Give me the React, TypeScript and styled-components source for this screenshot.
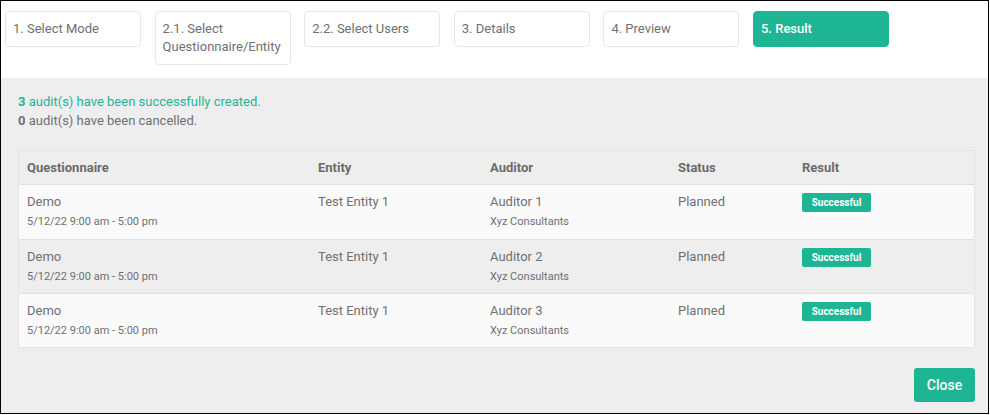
import styled, { createGlobalStyle } from "styled-components";

const GlobalStyle = createGlobalStyle`
  html, body {
    margin: 0;
    padding: 0;
    background: #fff;
  }
  body {
    font-family: Roboto, "Liberation Sans", Arial, sans-serif;
  }
`;

const steps = [
  "1. Select Mode",
  "2.1. Select Questionnaire/Entity",
  "2.2. Select Users",
  "3. Details",
  "4. Preview",
  "5. Result",
];

const rows = [
  { auditor: "Auditor 1" },
  { auditor: "Auditor 2" },
  { auditor: "Auditor 3" },
];

export default function App() {
  return (
    <>
      <GlobalStyle />
      <Frame>
        <StepBar>
          {steps.map((s, i) => (
            <Step key={s} $active={i === steps.length - 1}>
              {s}
            </Step>
          ))}
        </StepBar>
        <Panel>
          <Messages>
            <Success>
              <b>3</b> audit(s) have been successfully created.
            </Success>
            <Cancelled>
              <b>0</b> audit(s) have been cancelled.
            </Cancelled>
          </Messages>
          <Table>
            <HeadRow>
              <HeadCell>Questionnaire</HeadCell>
              <HeadCell>Entity</HeadCell>
              <HeadCell>Auditor</HeadCell>
              <HeadCell>Status</HeadCell>
              <HeadCell>Result</HeadCell>
            </HeadRow>
            {rows.map((r, i) => (
              <Row key={r.auditor} $striped={i % 2 === 1}>
                <Cell>
                  <Main>Demo</Main>
                  <Sub>5/12/22 9:00 am - 5:00 pm</Sub>
                </Cell>
                <Cell>
                  <Main>Test Entity 1</Main>
                </Cell>
                <Cell>
                  <Main>{r.auditor}</Main>
                  <Sub>Xyz Consultants</Sub>
                </Cell>
                <Cell>
                  <Main>Planned</Main>
                </Cell>
                <Cell>
                  <Badge>Successful</Badge>
                </Cell>
              </Row>
            ))}
          </Table>
          <Footer>
            <CloseButton>Close</CloseButton>
          </Footer>
        </Panel>
      </Frame>
    </>
  );
}

const Frame = styled.div`
  width: 989px;
  height: 414px;
  box-sizing: border-box;
  border: 1px solid #000;
  display: flex;
  flex-direction: column;
  background: #fff;
  overflow: hidden;
`;

const StepBar = styled.div`
  height: 77px;
  box-sizing: border-box;
  padding: 10px 0 0 4px;
  display: flex;
  align-items: flex-start;
  gap: 13.6px;
`;

const Step = styled.div<{ $active?: boolean }>`
  width: 136px;
  min-height: 36px;
  box-sizing: border-box;
  padding: 8px 7px 8px 7px;
  border: 1px solid ${({ $active }) => ($active ? "#1db593" : "#e6e6e6")};
  border-radius: 4px;
  background: ${({ $active }) => ($active ? "#1db593" : "#fff")};
  color: ${({ $active }) => ($active ? "#fff" : "#707070")};
  font-size: 13px;
  line-height: 18px;
  font-weight: ${({ $active }) => ($active ? 500 : 400)};
`;

const Panel = styled.div`
  flex: 1;
  background: #eeeeee;
  padding: 14px 13px 0 17px;
  display: flex;
  flex-direction: column;
`;

const Messages = styled.div`
  font-size: 13px;
  line-height: 19px;
  margin-bottom: 20px;
`;

const Success = styled.div`
  color: #1db593;
`;

const Cancelled = styled.div`
  color: #707070;
`;

const Table = styled.div`
  border: 1px solid #e4e4e4;
  display: flex;
  flex-direction: column;
`;

const HeadRow = styled.div`
  display: grid;
  grid-template-columns: 291px 172px 188px 124px 1fr;
  height: 33px;
  align-items: center;
  padding-left: 8px;
  border-bottom: 1px solid #dedede;
  background: #eeeeee;
`;

const HeadCell = styled.div`
  font-size: 13px;
  font-weight: 700;
  color: #6b6b6b;
`;

const Row = styled.div<{ $striped?: boolean }>`
  display: grid;
  grid-template-columns: 291px 172px 188px 124px 1fr;
  height: 54px;
  box-sizing: border-box;
  padding: 9px 0 0 8px;
  background: ${({ $striped }) => ($striped ? "#eeeeee" : "#fafafa")};
  & + & {
    border-top: 1px solid #e2e2e2;
  }
`;

const Cell = styled.div`
  display: flex;
  flex-direction: column;
  align-items: flex-start;
`;

const Main = styled.div`
  font-size: 13px;
  line-height: 16px;
  color: #707070;
`;

const Sub = styled.div`
  font-size: 11px;
  line-height: 14px;
  margin-top: 5px;
  color: #707070;
`;

const Badge = styled.span`
  display: inline-block;
  width: 69px;
  height: 19px;
  line-height: 19px;
  text-align: center;
  box-sizing: border-box;
  border-radius: 2px;
  background: #1db593;
  color: #fff;
  font-size: 10px;
  font-weight: 700;
  margin-top: -1px;
`;

const Footer = styled.div`
  display: flex;
  justify-content: flex-end;
  padding-top: 20px;
`;

const CloseButton = styled.button`
  width: 61px;
  height: 34px;
  border: none;
  border-radius: 3px;
  background: #1db593;
  color: #fff;
  font-family: Roboto, "Liberation Sans", Arial, sans-serif;
  font-size: 14px;
  font-weight: 500;
  cursor: pointer;
`;
